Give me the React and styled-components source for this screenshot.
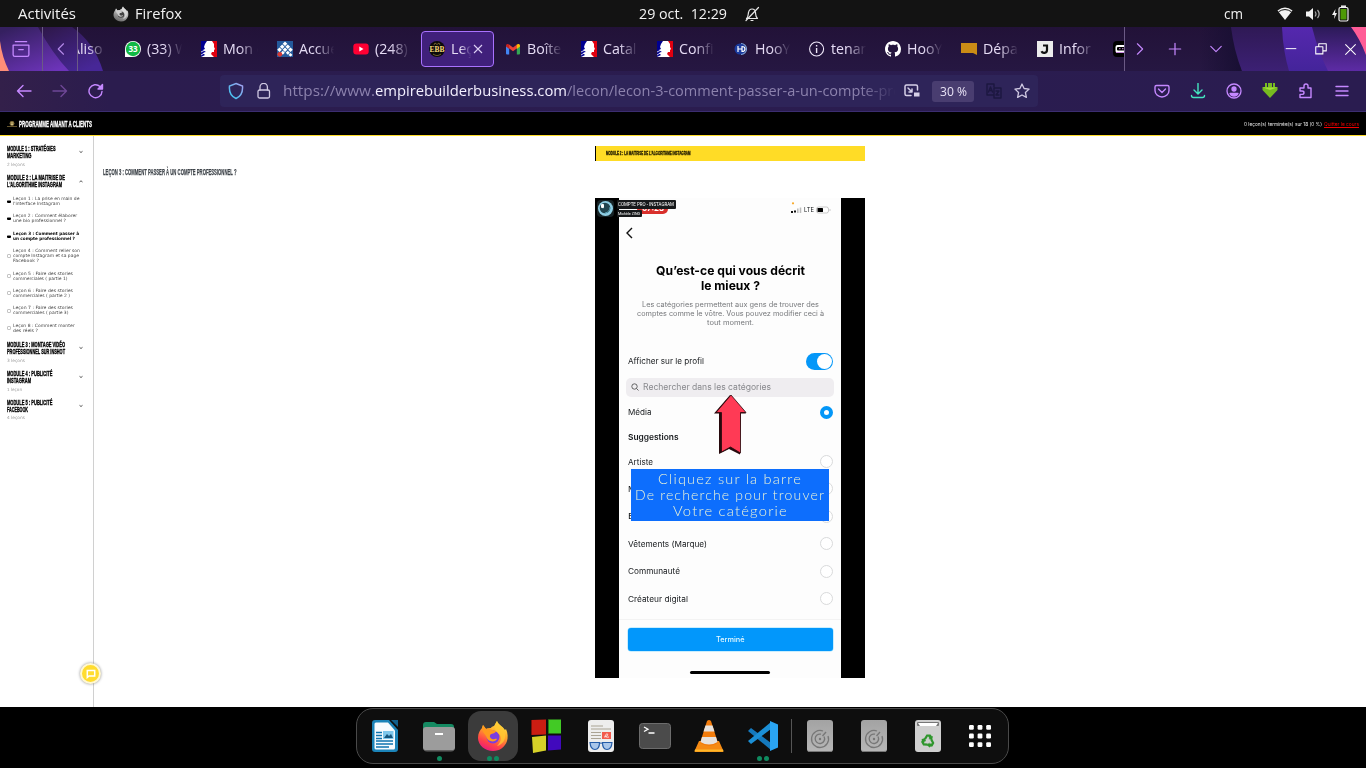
import React, { useLayoutEffect, useRef } from "react";
import styled, { createGlobalStyle, css } from "styled-components";

const ui = `"Open Sans", "Noto Sans", sans-serif`;

const Global = createGlobalStyle`
  * { box-sizing: border-box; }
  body { margin: 0; background: #000; overflow: hidden; font-family: ${ui}; }
  svg { display: block; flex: none; }
`;

/* Text stretched or condensed to a given width. */
const FitBox = styled.span`
  display: block;
  flex: none;
  width: ${(p) => p.$w}px;
  white-space: pre;
  span { display: inline-block; transform-origin: 0 50%; }
`;
function Fit({ w, children }) {
  const ref = useRef(null);
  useLayoutEffect(() => {
    const el = ref.current;
    el.style.transform = "none";
    const natural = el.getBoundingClientRect().width;
    if (natural) el.style.transform = `scaleX(${w / natural})`;
  }, [w]);
  return (
    <FitBox $w={w}>
      <span ref={ref}>{children}</span>
    </FitBox>
  );
}

const Screen = styled.div`
  width: 1366px;
  height: 768px;
  display: flex;
  flex-direction: column;
  overflow: hidden;
  background: #000;
`;

/* ---------- system bar ---------- */
const SystemBar = styled.header`
  height: 27px;
  flex: none;
  display: grid;
  grid-template-columns: 1fr 120px 1fr;
  align-items: center;
  background: #131313;
  color: #f2f2f2;
  font-size: 14px;
  line-height: 27px;
`;
const BarGroup = styled.div`
  display: flex;
  align-items: center;
  justify-content: ${(p) => p.$align || "flex-start"};
  gap: ${(p) => p.$gap || 0}px;
  padding: ${(p) => p.$pad || 0};
`;

/* ---------- firefox chrome ---------- */
const TabBar = styled.div`
  height: 44px;
  flex: none;
  position: relative;
  display: flex;
  align-items: center;
  background: linear-gradient(#221238, #261742);
`;
const Deco = styled.svg`
  position: absolute;
  top: 0;
  ${(p) => (p.$right ? "right: 0;" : "left: 0;")}
`;
const BarButton = styled.div`
  position: relative;
  width: ${(p) => p.$w}px;
  height: 44px;
  flex: none;
  display: flex;
  align-items: center;
  justify-content: center;
  ${(p) => p.$line && css`border-right: 1px solid #6b5a85;`}
`;
const TabStrip = styled.div`
  position: relative;
  width: 1046px;
  height: 44px;
  flex: none;
  display: flex;
  align-items: center;
  overflow: hidden;
`;
const Tab = styled.div`
  width: 76px;
  height: 36px;
  flex: none;
  display: flex;
  align-items: center;
  gap: 6px;
  padding-left: 8px;
  &:first-child { margin-left: -37px; }
  color: #e6dcf5;
  font-size: 14.2px;
  line-height: 36px;
  ${(p) => p.$active && css`
    width: 73px;
    margin-right: 3px;
    border: 1px solid #a972ff;
    border-radius: 4px;
    padding-left: 7px;
    background: #40207b;
  `}
`;
const TabLabel = styled.div`
  width: ${(p) => p.$w || 36}px;
  overflow: hidden;
  white-space: nowrap;
  mask-image: linear-gradient(90deg, #000 45%, transparent 98%);
`;
const CloseMark = styled.svg`margin-left: -5px;`;

const NavBar = styled.div`
  height: 41px;
  flex: none;
  display: flex;
  align-items: center;
  background: linear-gradient(90deg, #33204a 0, #2b1c4e 110px, #2a1c50 100%);
  border-bottom: 1px solid #3b2d70;
`;
const NavButtons = styled.div`
  width: 220px;
  display: flex;
  gap: 20px;
  padding-left: 16px;
`;
const UrlBar = styled.div`
  width: 818px;
  height: 32px;
  display: flex;
  align-items: center;
  padding-left: 8px;
  border-radius: 4px;
  background: #2e2459;
`;
const Url = styled.div`
  width: 613px;
  margin: 0 8px 0 11px;
  display: flex;
  overflow: hidden;
  color: #8c82ad;
  font-size: 14.2px;
  line-height: 32px;
  mask-image: linear-gradient(90deg, #000 94%, transparent 100%);
  strong { font-weight: 400; color: #f4f0ff; }
`;
const ZoomBadge = styled.div`
  width: 42px;
  height: 21px;
  margin: 0 12px;
  padding-left: 7.5px;
  border-radius: 3px;
  background: #493d70;
  color: #e8e2f5;
  font-size: 12px;
  line-height: 21px;
`;
const Tools = styled.div`
  display: flex;
  gap: 20px;
  padding-left: 116px;
`;

/* ---------- web page ---------- */
const heavy = css`
  font-family: "Liberation Sans Narrow", "Liberation Sans", Arial, sans-serif;
  font-weight: 700;
`;
const PageHeader = styled.div`
  height: 24px;
  flex: none;
  display: flex;
  align-items: center;
  justify-content: space-between;
  padding: 0 7px;
  background: #000;
  border-bottom: 1px solid #ffdd2a;
`;
const Brand = styled.div`
  ${heavy}
  display: flex;
  align-items: center;
  gap: 2px;
  color: #fff;
  font-size: 8.8px;
  -webkit-text-stroke: 0.3px #fff;
`;
const Progress = styled.div`
  display: flex;
  gap: 2px;
  color: #e8e8e8;
  font-family: Inter, sans-serif;
  font-size: 5px;
  u { color: #f00000; text-decoration: none; }
  u span span { text-decoration: underline; }
`;
const Page = styled.div`
  height: 571px;
  flex: none;
  display: flex;
  background: #fff;
`;
const Sidebar = styled.aside`
  position: relative;
  width: 94px;
  padding-top: 9px;
  border-right: 1px solid #d0d0d0;
`;
const Module = styled.div`
  display: flex;
  align-items: center;
  justify-content: space-between;
  height: 14px;
  margin-top: ${(p) => p.$mt || 0}px;
  padding: 0 9px 0 7px;
`;
const ModuleTitle = styled.div`
  ${heavy}
  color: #000;
  font-size: 8px;
  line-height: 7px;
  -webkit-text-stroke: 0.4px #000;
`;
const Count = styled.div`
  height: 6px;
  margin: 2.5px 0 0 7px;
  color: #999;
  font-family: "DejaVu Sans", sans-serif;
  font-size: 4.3px;
  line-height: 6px;
`;
const Lesson = styled.div`
  display: flex;
  align-items: center;
  gap: 2px;
  margin-top: ${(p) => p.$mt}px;
  padding-left: 7px;
  color: ${(p) => (p.$current ? "#000" : "#444")};
  font-family: "DejaVu Sans", sans-serif;
  font-size: 4.4px;
  line-height: 5px;
  font-weight: ${(p) => (p.$current ? 700 : 400)};
`;
const Check = styled.i`
  width: 4px;
  height: ${(p) => (p.$done ? 3 : 4)}px;
  margin-top: 1px;
  border-radius: 1px;
  ${(p) => (p.$done ? css`background: linear-gradient(#888 30%, #000 31%);` : css`border: 1px solid #c4c4c4;`)}
`;
const ChatButton = styled.div`
  position: absolute;
  left: 80px;
  bottom: 23px;
  width: 21px;
  height: 21px;
  display: grid;
  place-items: center;
  border: 2px solid #fff8d4;
  border-radius: 50%;
  background: #ffdc30;
  box-shadow: 0 0 3px rgba(0, 0, 0, 0.45);
`;
const Main = styled.main`
  width: 1272px;
  display: flex;
  flex-direction: column;
  align-items: center;
`;
const ModuleBanner = styled.div`
  ${heavy}
  width: 270px;
  height: 15px;
  margin-top: 10px;
  padding-left: 10px;
  border-left: 1px solid #000;
  background: #ffdc26;
  color: #1c1700;
  font-size: 4.7px;
  line-height: 15px;
  -webkit-text-stroke: 0.3px #1c1700;
`;
const LessonTitle = styled.h1`
  ${heavy}
  align-self: flex-start;
  height: 12px;
  margin: 5px 0 20px 9px;
  color: #3f454b;
  font-size: 9.6px;
  line-height: 12px;
  -webkit-text-stroke: 0.25px #3f454b;
`;
const Video = styled.div`
  position: relative;
  width: 270px;
  height: 480px;
  padding: 0 24px;
  background: #000;
`;

/* ---------- phone recording in the video ---------- */
const Phone = styled.div`
  width: 222px;
  height: 480px;
  padding: 0 8.5px;
  background: #fdfdfd;
  color: #16191c;
  font-family: Inter, sans-serif;
  font-size: 8px;
`;
const Status = styled.div`
  height: 24px;
  display: flex;
  align-items: center;
  justify-content: flex-end;
  gap: 2px;
  padding-right: 2px;
  font-size: 6.6px;
`;
const BackIcon = styled.svg`
  margin-left: -3px;
`;
const Heading = styled.h2`
  display: flex;
  flex-direction: column;
  align-items: center;
  margin: 18px 0 7px;
  font-size: 12.4px;
  line-height: 15px;
  font-weight: 700;
  color: #000;
`;
const Intro = styled.div`
  display: flex;
  flex-direction: column;
  align-items: center;
  margin-bottom: 21.5px;
  color: #77797c;
  font-size: 7.3px;
  line-height: 9px;
`;
const Row = styled.div`
  height: ${(p) => p.$h || 27.5}px;
  display: flex;
  align-items: center;
  justify-content: space-between;
  font-weight: ${(p) => (p.$bold ? 600 : 400)};
`;
const Toggle = styled.div`
  width: 27px;
  height: 17px;
  padding: 1px;
  display: flex;
  justify-content: flex-end;
  border-radius: 9px;
  background: #0497f8;
  &::after { content: ""; width: 15px; height: 15px; border-radius: 50%; background: #fff; }
`;
const Search = styled.div`
  height: 19px;
  margin: 3px -1.5px 2.5px;
  display: flex;
  align-items: center;
  gap: 4px;
  padding-left: 5px;
  border-radius: 5px;
  background: #efedf0;
  color: #88898d;
  font-size: 8.4px;
`;
const Radio = styled.i`
  width: 13px;
  height: 13px;
  border-radius: 50%;
  border: ${(p) => (p.$on ? "4.2px solid #0497f8" : "1px solid #d9dadb")};
  background: #fff;
`;
const Done = styled.div`
  height: 23px;
  margin: 8px 0 20px;
  display: flex;
  align-items: center;
  justify-content: center;
  border-radius: 3px;
  background: #0297fb;
  box-shadow: 0 0 0 0.5px #96e0ff;
  color: #e6f9ff;
  font-size: 7.2px;
  font-weight: 500;
`;
const Divider = styled.div`
  height: 1px;
  margin: 6px -8.5px 0;
  background: #f3f3f3;
`;
const HomeBar = styled.div`
  width: 80px;
  height: 3px;
  margin: 0 auto;
  border-radius: 2px;
  background: #000;
`;
const VideoBadge = styled.div`
  position: absolute;
  left: 22px;
  top: ${(p) => p.$top}px;
  height: ${(p) => p.$h}px;
  padding: 0 2px 0 1px;
  border-radius: 1px;
  background: #17191b;
  color: #fff;
  font: ${(p) => p.$size}px/${(p) => p.$h}px Roboto, sans-serif;
`;
const Recording = styled.div`
  position: absolute;
  left: 42px;
  top: 5px;
  width: 31px;
  height: 11px;
  border-radius: 5px;
  background: #d9302c;
  color: #fff;
  font: 700 8px/11px Inter, sans-serif;
  display: flex;
  justify-content: center;
`;
const Avatar = styled.svg`
  position: absolute;
  left: 2px;
  top: 2px;
`;
const Arrow = styled.svg`
  position: absolute;
  left: 118px;
  top: 195px;
`;
const Caption = styled.div`
  position: absolute;
  left: 36px;
  top: 271px;
  width: 198px;
  height: 52px;
  display: flex;
  flex-direction: column;
  align-items: center;
  padding-top: 2px;
  background: #0d6efd;
  color: #eef5d6;
  font-family: Lato, sans-serif;
  font-weight: 300;
  font-size: 14.5px;
  line-height: 16px;
  letter-spacing: 1.2px;
`;

/* ---------- dock ---------- */
const Dock = styled.footer`
  width: 653px;
  height: 56px;
  margin: 1px 0 0 356px;
  flex: none;
  display: flex;
  align-items: center;
  padding-left: 1px;
  border: 1px solid #4a4a4a;
  border-radius: 17px;
  background: #0e0e0e;
`;
const DockItem = styled.div`
  position: relative;
  width: ${(p) => p.$w || 54}px;
  height: 54px;
  flex: none;
  display: grid;
  place-items: center;
  &::before {
    content: "";
    position: absolute;
    inset: 2px;
    border-radius: 13px;
    background: ${(p) => (p.$active ? "#3b3b3b" : "transparent")};
  }
  svg { position: relative; }
`;
const Dots = styled.div`
  position: absolute;
  bottom: 2px;
  left: 0;
  right: 0;
  display: flex;
  justify-content: center;
  gap: 2px;
  i { width: 5px; height: 5px; border-radius: 50%; background: #0f8a5f; }
`;
const DockLine = styled.div`
  width: 1px;
  height: 34px;
  margin: 0 1px 0 1px;
  background: #555;
`;

/* ---------- icons ---------- */
const Ico = ({ s = 16, c = "#c588ff", w = 1.3, children }) => (
  <svg width={s} height={s} viewBox="0 0 16 16" fill="none" stroke={c} strokeWidth={w} strokeLinecap="round" strokeLinejoin="round">
    {children}
  </svg>
);
const Marianne = () => (
  <svg width="16" height="16" viewBox="0 0 16 16">
    <rect width="16" height="16" fill="#fff" />
    <path d="M0 0h6L4 3 3 6l1 2-2 1 3 2-3 1 2 2-4 2z" fill="#000091" />
    <path d="M16 0h-5l2 3v3l1 2-1 1v2h-2l-1 2 3 3h3z" fill="#e1000f" />
    <path d="M0 11l4-2M0 14l5-3" stroke="#fff" strokeWidth=".8" />
  </svg>
);
const Ebb = ({ s = 16 }) => (
  <svg width={s} height={s} viewBox="0 0 16 16">
    <circle cx="8" cy="8" r="8" fill="#0a0a0a" />
    <path d="M5 4l1-2 2 1.5L10 2l1 2M4 13c3 2 5 2 8 0" stroke="#8c7335" strokeWidth=".8" fill="none" />
    <text x="8" y="11.2" textAnchor="middle" fontSize="8.5" fontWeight="700" fontFamily="Liberation Serif, serif" fill="#f4d77b" textLength="15" lengthAdjust="spacingAndGlyphs">EBB</text>
  </svg>
);
const favicons = {
  none: <svg width="16" height="16" />,
  whatsapp: (
    <svg width="16" height="16" viewBox="0 0 16 16">
      <path d="M0 16V8a8 8 0 1 1 8 8z" fill="#fff" />
      <circle cx="8" cy="8" r="7.2" fill="#10b944" />
      <text x="8" y="11" textAnchor="middle" fontSize="8" fontWeight="700" fontFamily="Open Sans, sans-serif" fill="#fff">33</text>
    </svg>
  ),
  marianne: <Marianne />,
  accu: (
    <svg width="16" height="16" viewBox="0 0 16 16">
      <rect width="16" height="16" fill="#245a9c" />
      <g fill="#fff">
        <path d="M8 .5l2.300 2.300L8 5.100 5.700 2.800zM5.200 3.500l2.300 2.300-2.300 2.300-2.300-2.300zM10.800 3.500l2.300 2.300-2.300 2.300-2.300-2.300zM2.500 6.500l2.300 2.300-2.300 2.300L.2 8.800zM8 6.500l2.300 2.300L8 11.100 5.700 8.800zM13.500 6.500l2.300 2.300-2.300 2.300-2.300-2.300zM5.800 9.800l2 2-2 2-2-2zM10.800 9.800l2 2-2 2-2-2zM13.500 12l2 2-2 1.500-2-1.500z" />
      </g>
      <circle cx="2.800" cy="13.300" r="2.400" fill="#d93a35" />
    </svg>
  ),
  youtube: (
    <svg width="16" height="16" viewBox="0 0 16 16">
      <rect x=".3" y="2.4" width="15.4" height="11.2" rx="3" fill="#ff0033" />
      <path d="M6.3 5.5v5l4.2-2.5z" fill="#fff" />
    </svg>
  ),
  ebb: <Ebb />,
  gmail: (
    <svg width="16" height="16" viewBox="0 0 16 16">
      <path d="M1 4.500l3.200 2.300v6.700H2a1 1 0 0 1-1-1z" fill="#4285f4" />
      <path d="M15 4.500l-3.200 2.300v6.700H14a1 1 0 0 0 1-1z" fill="#34a853" />
      <path d="M4 3.600L8 6.600l4-3v3.600l-4 3-4-3z" fill="#ea4335" />
      <path d="M11.800 3.600c1.300-1.200 3.200-.6 3.200 1v1l-3.200 2.400z" fill="#fbbc04" />
      <path d="M4.200 3.600C2.900 2.400 1 3 1 4.600v1L4.200 8z" fill="#c5221f" />
    </svg>
  ),
  hoo: (
    <svg width="16" height="16" viewBox="0 0 16 16">
      <circle cx="7" cy="8" r="5.500" fill="#1a3b9e" />
      <path d="M8 2.500a5.500 5.500 0 0 1 0 11" fill="none" stroke="#7fa6de" strokeWidth="1.200" />
      <path d="M5 5v6M5 8h4M9 5v6M9 5.500c4 0 4 5 0 5" stroke="#fff" strokeWidth="1.200" fill="none" />
    </svg>
  ),
  info: (
    <svg width="16" height="16" viewBox="0 0 16 16" fill="none" stroke="#efe8fa" strokeWidth="1.100">
      <circle cx="7.600" cy="8" r="7" />
      <path d="M7.600 7v5M7.600 4v1.500" strokeWidth="1.400" />
    </svg>
  ),
  github: (
    <svg width="16" height="16" viewBox="0 0 16 16" fill="#fff">
      <path d="M8 0C3.580 0 0 3.580 0 8c0 3.540 2.290 6.530 5.470 7.590.4.070.55-.17.55-.38 0-.19-.01-.82-.01-1.490-2.010.37-2.530-.49-2.690-.94-.09-.23-.48-.94-.82-1.130-.28-.15-.68-.52-.01-.53.63-.01 1.080.58 1.230.82.72 1.210 1.870.87 2.330.66.07-.52.28-.87.51-1.070-1.780-.2-3.640-.89-3.640-3.950 0-.87.31-1.590.82-2.150-.08-.2-.36-1.020.08-2.120 0 0 .67-.21 2.200.82.64-.18 1.320-.27 2-.27s1.360.09 2 .27c1.530-1.040 2.200-.82 2.200-.82.44 1.100.16 1.920.08 2.120.51.56.82 1.270.82 2.150 0 3.070-1.870 3.750-3.650 3.950.29.25.54.73.54 1.480 0 1.070-.01 1.930-.01 2.200 0 .21.15.46.55.38A8.010 8.010 0 0 0 16 8c0-4.420-3.580-8-8-8z" />
    </svg>
  ),
  depart: (
    <svg width="16" height="16" viewBox="0 0 16 16"><path d="M0 2h16v12l-4-2H0z" fill="#cb8c15" /></svg>
  ),
  j: (
    <svg width="16" height="16" viewBox="0 0 16 16">
      <rect width="16" height="16" fill="#ececec" />
      <path d="M6 4.500h4V9c0 3.500-4.500 3.500-5.500 1.300" fill="none" stroke="#111" strokeWidth="2.200" />
    </svg>
  ),
  bot: (
    <svg width="16" height="16" viewBox="0 0 16 16">
      <rect width="16" height="16" rx="4" fill="#000" />
      <rect x="2.500" y="4" width="13" height="8" rx="2" fill="#fff" />
      <rect x="4" y="6" width="12" height="3.500" rx="1" fill="#000" />
      <path d="M6 7.700h1.500M9 7.700h1.500M3 11.500h9" stroke="#c98adf" />
    </svg>
  ),
};

const FirefoxLogo = ({ s = 32, gray }) => (
  <svg width={s} height={s} viewBox="0 0 32 32">
    <defs>
      <linearGradient id={gray ? "fg" : "ff"} x1=".75" y1="0" x2=".3" y2="1">
        <stop offset="0" stopColor={gray ? "#eee" : "#fff14a"} />
        <stop offset=".4" stopColor={gray ? "#bbb" : "#ffa52a"} />
        <stop offset=".75" stopColor={gray ? "#888" : "#ff4248"} />
        <stop offset="1" stopColor={gray ? "#666" : "#e9197e"} />
      </linearGradient>
    </defs>
    <path d="M1 18C1 13 3 10 5 8l1-3 3 4c2-1 4-1 5-1 0-1 2-2 3-2l3-5c1 4 6 5 8 9l1-1c2 4 2 9 1 12-2 6-7 10-14 10C8 31 1 25 1 18z" fill={`url(#${gray ? "fg" : "ff"})`} />
    <circle cx="16" cy="17" r="6.500" fill={gray ? "#444" : "#7a3ee0"} />
    <path d="M5 8l1-3 3 4c3-1 5 0 6 1l4 1c0 2-4 3-5 3-2 2-1 4 1 5s4-1 5 0c-2 4-10 3-11-3-2-3-4-5-4-8z" fill={gray ? "#ccc" : "#ff9a1f"} />
    <path d="M20 1c1 4 8 6 8 13 1 6-3 11-8 12 5-5 5-10 1-13-4-3-4-8-1-12z" fill={gray ? "#ddd" : "#ffc832"} opacity=".8" />
  </svg>
);
const Drive = () => (
  <svg width="32" height="34" viewBox="0 0 32 34">
    <defs><linearGradient id="drv" x2="0" y2="1"><stop stopColor="#a3a3a3" /><stop offset="1" stopColor="#b7b7b7" /></linearGradient></defs>
    <rect x="3" y="1" width="26" height="32" rx="3" fill="url(#drv)" />
    <path d="M3.500 31.500q0 1 2.500 1h20q2.500 0 2.500-1" stroke="#777" fill="none" />
    <g fill="none" stroke="#777" strokeWidth="1.300">
      <path d="M24 17a8.500 8.500 0 1 1-5-5M20 17.500a4.700 4.700 0 1 1-3-2.300" />
      <path d="M18.500 17l3.500-4" />
    </g>
    <circle cx="16" cy="20" r="1.200" fill="#777" />
  </svg>
);
const dockIcons = {
  writer: (
    <svg width="32" height="34" viewBox="0 0 32 34">
      <path d="M6 1h14l9 10v19q0 3-3 3H6q-3 0-3-3V4q0-3 3-3z" fill="#1b83b8" />
      <path d="M7 3.500h12l7 8V29q0 1.500-1.500 1.500h-17Q5.500 30.500 5.500 29V5q0-1.500 1.500-1.500z" fill="#f6fbfe" />
      <path d="M22 1h7v7z" fill="#12608c" />
      <path d="M7 13.500h6M7 16.500h6M7 19.500h6M7 22h17M7 25h17M7 28h13" stroke="#0e74b0" strokeWidth="1.300" />
      <rect x="14" y="12" width="10.500" height="8" fill="#7ec7ec" />
      <path d="M15 19l3-4 2 2 2-2 2 4z" fill="#15557c" />
    </svg>
  ),
  files: (
    <svg width="34" height="34" viewBox="0 0 34 34">
      <path d="M1 6q0-3 3-3h8l3 2h14q3 0 3 3v8H1z" fill="#158a62" />
      <rect x="1" y="8" width="32" height="23.500" rx="3" fill="#9c9c9c" />
      <path d="M2 30.500q0 1.500 3 1.500h24q3 0 3-1.500" stroke="#666" fill="none" />
      <path d="M13 15h8" stroke="#fff" strokeWidth="2" />
    </svg>
  ),
  blocks: (
    <svg width="34" height="36" viewBox="0 0 34 36">
      <path d="M1 2l15-.5v15L1 17z" fill="#cb1d12" /><path d="M18 1.500h13v14H18z" fill="#42ca25" />
      <path d="M2 19l14-1.500v15L3 35z" fill="#d6d128" /><path d="M18 17.500h13v14l-13 1z" fill="#4109bd" />
      <path d="M1 2v15l1 .5V1.800zM18 1.500v14h1V2z" fill="#0006" />
    </svg>
  ),
  doc: (
    <svg width="32" height="34" viewBox="0 0 32 34">
      <rect x="3" y="1" width="26" height="32" rx="3" fill="#ededed" />
      <path d="M6 7h12M6 10h20M6 13.500h10M6 16.500h10M6 19.500h10" stroke="#aaa394" strokeWidth="1.200" />
      <rect x="17" y="13" width="9" height="7" fill="#f25a4d" />
      <path d="M19 18c3 0 5-3 3-3s-3 4 2 3" stroke="#fff" fill="none" strokeWidth=".8" />
      <path d="M5 23.500h9.500q0 7-4.500 7t-5-7zM17.500 23.500H27q-.5 7-5 7t-4.500-7z" fill="#a9c6ea" stroke="#245ca8" strokeWidth="1.200" />
      <path d="M14 24.500q2-1 4 0" stroke="#245ca8" fill="none" />
    </svg>
  ),
  term: (
    <svg width="34" height="34" viewBox="0 0 34 34">
      <rect x="1.500" y="4.500" width="31" height="25" rx="3" fill="#4b4b4b" stroke="#6c6c6c" />
      <path d="M6 8l4 2.200L6 12.500M10.500 14h6" stroke="#fff" strokeWidth="1.300" fill="none" />
    </svg>
  ),
  vlc: (
    <svg width="32" height="34" viewBox="0 0 32 34">
      <path d="M6 22h20l4 9q1 2-1 2H3q-2 0-1-2z" fill="#f58a13" />
      <path d="M2 30.500h28l.5 2H1.500z" fill="#ffb82a" />
      <path d="M14 2q2-2 4 0l7 22q-9 6-18 0z" fill="#f27c0c" />
      <path d="M12.500 6.500h7l2 6h-11zM9 18h14l1.500 5q-8.500 5-17 0z" fill="#e6e2dd" />
    </svg>
  ),
  code: (
    <svg width="32" height="34" viewBox="0 0 32 34">
      <path d="M1 12l3-3 20 15v7z" fill="#1579bd" />
      <path d="M1 22l3 3L24 10V3z" fill="#1b8fd6" />
      <path d="M23 2l8 3.500v23L23 32z" fill="#2aa4f2" />
    </svg>
  ),
  drive: <Drive />,
  trash: (
    <svg width="32" height="34" viewBox="0 0 32 34">
      <rect x="3" y="1" width="26" height="32" rx="3" fill="#cfcfcf" />
      <rect x="5" y="3" width="22" height="4" rx="1" fill="#777" />
      <path d="M6 4h20l-2 3H8z" fill="#fff" />
      <g transform="translate(16 22)" fill="#2f962d">
        {[0, 120, 240].map((a) => (
          <path key={a} transform={`rotate(${a})`} d="M-4-2.500L-1.500-6.500h4L4-4.500l1-.5-1 4-3.500-1 1-.7-1.500-2-2 3.200z" />
        ))}
      </g>
    </svg>
  ),
  grid: (
    <svg width="24" height="24" viewBox="0 0 24 24" fill="#fff">
      {[0, 1, 2].map((r) => [0, 1, 2].map((c) => <rect key={`${r}${c}`} x={1 + c * 8.600} y={1 + r * 8.600} width="4.800" height="4.800" rx="1.200" />))}
    </svg>
  ),
};

/* ---------- data ---------- */
const tabs = [
  ["none", "Aliso"],
  ["whatsapp", "(33) W"],
  ["marianne", "Mon e"],
  ["accu", "Accue"],
  ["youtube", "(248)"],
  ["ebb", "Leço", true],
  ["gmail", "Boîte"],
  ["marianne", "Catal"],
  ["marianne", "Confi"],
  ["hoo", "HooY"],
  ["info", "tenan"],
  ["github", "HooY"],
  ["depart", "Dépar"],
  ["j", "Infor"],
  ["bot", ""],
];
const lessons = [
  { mt: 8, done: true, lines: [["Leçon 1 : La prise en main de", 66.5], ["l'interface Instagram", 47]] },
  { mt: 7.2, done: true, lines: [["Leçon 2 : Comment élaborer", 64], ["une bio professionnel ?", 53]] },
  { mt: 7.5, done: true, current: true, lines: [["Leçon 3 : Comment passer à", 66], ["un compte professionnel ?", 62]] },
  { mt: 7, lines: [["Leçon 4 : Comment relier son", 67], ["compte Instagram et sa page", 66], ["Facebook ?", 26]] },
  { mt: 8, lines: [["Leçon 5 : Faire des stories", 60], ["commerciales ( partie 1)", 54.5]] },
  { mt: 7.3, lines: [["Leçon 6 : Faire des stories", 60], ["commerciales ( partie 2 )", 57]] },
  { mt: 7.3, lines: [["Leçon 7 : Faire des stories", 60], ["commerciales ( partie 3)", 55.5]] },
  { mt: 7.7, lines: [["Leçon 8 : Comment monter", 61.5], ["des réels ?", 25]] },
];

function ModuleHead({ lines, mt, up, count }) {
  return (
    <>
      <Module $mt={mt}>
        <ModuleTitle>{lines.map(([t, w]) => <Fit key={t} w={w}>{t}</Fit>)}</ModuleTitle>
        <svg width="6" height="4" viewBox="0 0 6 4" fill="none" stroke="#555" strokeWidth="1">
          <path d={up ? "M1.500 3L3 1.800 4.500 3" : "M1.500 1.300L3 2.500l1.500-1.200"} />
        </svg>
      </Module>
      {count && <Count><Fit w={count[1]}>{count[0]}</Fit></Count>}
    </>
  );
}

function PhoneScreen() {
  return (
    <Phone>
      <Status>
        <svg width="11" height="16" viewBox="0 0 11 16">
          <circle cx="2" cy="1.300" r="1.100" fill="#f9a825" />
          <path d="M0 10h2M3 9.500h2" stroke="#111" strokeWidth="2" />
          <path d="M6.800 11V6.500M9.500 11V5.500" stroke="#bbb" strokeWidth="1.500" />
        </svg>
        <Fit w={10}>LTE</Fit>
        <svg width="15" height="8" viewBox="0 0 15 8">
          <rect x=".5" y="1" width="12" height="6" rx="2" fill="#fff" stroke="#bbb" strokeWidth=".8" />
          <rect x="1.500" y="2" width="5.500" height="4" rx=".6" fill="#000" />
          <path d="M14 3v2" stroke="#ccc" />
        </svg>
      </Status>
      <Row $h={22.5}>
        <BackIcon width="10" height="12" viewBox="0 0 10 12" fill="none" stroke="#111" strokeWidth="1.400"><path d="M7 1L2 6l5 5" /></BackIcon>
      </Row>
      <Heading><Fit w={149}>Qu’est-ce qui vous décrit</Fit><Fit w={59}>le mieux ?</Fit></Heading>
      <Intro>
        <Fit w={177}>Les catégories permettent aux gens de trouver des</Fit>
        <Fit w={187}>comptes comme le vôtre. Vous pouvez modifier ceci à</Fit>
        <Fit w={47}>tout moment.</Fit>
      </Intro>
      <Row $h={26.5}><Fit w={76}>Afficher sur le profil</Fit><Toggle /></Row>
      <Search>
        <svg width="8" height="8" viewBox="0 0 8 8" fill="none" stroke="#555" strokeWidth=".9"><circle cx="3.500" cy="3.500" r="2.700" /><path d="M5.500 5.500L7.500 7.500" /></svg>
        <Fit w={128}>Rechercher dans les catégories</Fit>
      </Search>
      <Row $h={26.5}><Fit w={23.5}>Média</Fit><Radio $on /></Row>
      <Row $h={23} $bold><Fit w={50.5}>Suggestions</Fit></Row>
      <Row $h={26.5}><Fit w={25}>Artiste</Fit><Radio /></Row>
      <Row><Fit w={8}>M</Fit><Radio /></Row>
      <Row><Fit w={6}>E</Fit><Radio /></Row>
      <Row><Fit w={79}>Vêtements (Marque)</Fit><Radio /></Row>
      <Row><Fit w={52}>Communauté</Fit><Radio /></Row>
      <Row><Fit w={60}>Créateur digital</Fit><Radio /></Row>
      <Divider />
      <Done><Fit w={28.5}>Terminé</Fit></Done>
      <HomeBar />
    </Phone>
  );
}

export default function App() {
  return (
    <Screen>
      <Global />
      <SystemBar>
        <BarGroup $pad="0 0 0 18px">
          <Fit w={58}>Activités</Fit>
          <BarGroup $pad="0 0 0 37px" $gap={6}><FirefoxLogo s={16} gray /><Fit w={47}>Firefox</Fit></BarGroup>
        </BarGroup>
        <BarGroup $pad="0 0 0 16px" $gap={17}>
          <Fit w={88}>29 oct.  12:29</Fit>
          <Ico c="#e8e8e8" w={1.200}><path d="M2.500 12.500c2-1.500 1.500-4 2-6 .5-2.500 2-3.500 3.500-3.500 2 0 3.300 1.500 3.500 3.500.2 2 0 4.500 2 6zM7 14.500h2M2 14.500L14.500 1.500" /></Ico>
        </BarGroup>
        <BarGroup $align="flex-end" $pad="0 17px 0 0">
          <BarGroup $pad="0 34px 0 0"><Fit w={19}>cm</Fit></BarGroup>
          <svg width="16" height="16" viewBox="0 0 16 16"><path d="M.5 4.500Q8-1.500 15.500 4.500L8 14z" fill="#f2f2f2" /><path d="M1.500 5.800Q8 1.300 14.500 5.800" stroke="#131313" fill="none" /></svg>
          <BarGroup $pad="0 0 0 12px">
            <svg width="16" height="16" viewBox="0 0 16 16"><path d="M1 5.500h3L8 2v12L4 10.500H1z" fill="#f2f2f2" /><path d="M10 5.500q2 2.500 0 5M12.500 4q3.300 4 0 8" stroke="#aaa" strokeWidth="1.200" fill="none" /></svg>
          </BarGroup>
          <BarGroup $pad="0 0 0 10px">
            <svg width="18" height="18" viewBox="0 0 18 18"><path d="M4.500 4L1 10h2.500L3 14l3-6H4z" fill="#f2f2f2" /><rect x="8" y="2.500" width="9" height="13.500" rx="1.500" fill="none" stroke="#f2f2f2" strokeWidth="1.200" /><rect x="9.500" y="4" width="6" height="10.500" fill="#4e9a06" /><path d="M10 1.200h5" stroke="#f2f2f2" strokeWidth="1.500" /></svg>
          </BarGroup>
        </BarGroup>
      </SystemBar>

      <TabBar>
        <Deco width="130" height="44" viewBox="0 0 130 44">
          <defs>
            <linearGradient id="p1" x1=".2" y1="0" x2=".8" y2="1"><stop stopColor="#352060" /><stop offset="1" stopColor="#6d34ba" /></linearGradient>
            <linearGradient id="p2" x1="0" y1="0" x2=".7" y2="1"><stop stopColor="#2d1746" /><stop offset="1" stopColor="#472797" /></linearGradient>
          </defs>
          <path d="M38 0h34q22 15 31 44H60z" fill="url(#p2)" />
          <path d="M0 0h38q14 26 31 44H0z" fill="url(#p1)" />
          <path d="M0 14q2 16 9 30H0z" fill="#ff8e78" />
        </Deco>
        <Deco $right width="166" height="44" viewBox="0 0 166 44">
          <defs>
            <linearGradient id="q1" x2="0" y2="1"><stop stopColor="#2f1955" /><stop offset="1" stopColor="#3c2074" /></linearGradient>
            <linearGradient id="q2" x2="0" y2="1"><stop stopColor="#5528ae" /><stop offset="1" stopColor="#44249a" /></linearGradient>
            <linearGradient id="q3" x2="0" y2="1"><stop stopColor="#2c1a58" /><stop offset="1" stopColor="#5d2ba5" /></linearGradient>
            <linearGradient id="q0"><stop stopColor="#180f33" stopOpacity="0" /><stop offset="1" stopColor="#180f33" /></linearGradient>
          </defs>
          <path d="M0 0h31l11 44H0z" fill="url(#q0)" />
          <path d="M31 0h135v44H42q-8-20-11-44z" fill="url(#q1)" />
          <path d="M82 0h84v44H89q-6-20-7-44z" fill="url(#q2)" />
          <path d="M112 0h54v44h-38q-10-20-16-44z" fill="url(#q3)" />
          <path d="M151 0h15v28Q160 12 151 0z" fill="#ff5c96" />
        </Deco>
        <BarButton $w={43} $line>
          <Ico s={18} w={1.150}><path d="M3 1.500h10M1.500 4.500h13M1 4.500v8.500q0 1.500 1.500 1.500h11q1.500 0 1.500-1.500V4.500M6 8.500h4" /></Ico>
        </BarButton>
        <BarButton $w={35} $line><Ico s={14} c="#b58aea"><path d="M12 2L6 8l6 6" /></Ico></BarButton>
        <TabStrip>
          {tabs.map(([icon, label, active], i) => (
            <Tab key={i} $active={active}>
              {favicons[icon]}
              <TabLabel $w={active ? 21 : 36}>{label}</TabLabel>
              {active && <CloseMark width="10" height="10" viewBox="0 0 10 10" stroke="#ddd0f5" strokeWidth="1.100"><path d="M1 1l8 8M9 1L1 9" /></CloseMark>}
            </Tab>
          ))}
        </TabStrip>
        <BarButton $w={1} $line />
        <BarButton $w={29}><Ico s={14}><path d="M5 2l6 6-6 6" /></Ico></BarButton>
        <BarButton $w={42}><Ico s={14} w={1.400}><path d="M8 1.500v13M1.500 8h13" /></Ico></BarButton>
        <BarButton $w={39}><Ico s={14}><path d="M2 5l6 6 6-6" /></Ico></BarButton>
        <BarButton $w={40} />
        <BarButton $w={31}><Ico s={12} c="#fff" w={1.300}><path d="M1.500 7.500h13" /></Ico></BarButton>
        <BarButton $w={29}><Ico s={12} c="#fff" w={1.400}><path d="M1 5h9.500v9.500H1zM5 5V1h10v9.500h-4.500" /></Ico></BarButton>
        <BarButton $w={31}><Ico s={13} c="#fff" w={1.300}><path d="M2 2l12 12M14 2L2 14" /></Ico></BarButton>
      </TabBar>

      <NavBar>
        <NavButtons>
          <Ico w={1.400}><path d="M15 8H1.500M7 2.500L1.500 8 7 13.500" /></Ico>
          <Ico c="#6e4796" w={1.400}><path d="M1 8h13.500M9 2.500L14.500 8 9 13.500" /></Ico>
          <Ico w={1.400}><path d="M14 8.500a6.500 6.500 0 1 1-2-5L14 5.500" /><path d="M14.500 1.500v4.500H10z" fill="#c588ff" /></Ico>
        </NavButtons>
        <UrlBar>
          <svg width="16" height="18" viewBox="0 0 16 18"><defs><linearGradient id="sh" x1="0" y1="1" x2="1" y2="0"><stop stopColor="#35c7ef" /><stop offset="1" stopColor="#a6a0f0" /></linearGradient></defs><path d="M8 1.500l6.500 2.500c.4 5-1 10-6.500 12.500C2.500 14 1 9 1.500 4z" fill="none" stroke="url(#sh)" strokeWidth="1.500" /></svg>
          <BarGroup $pad="0 0 0 12px"><Ico c="#cfc8e2" w={1.300}><rect x="2" y="7" width="11.500" height="8" rx="1.500" /><path d="M4 7V4a3.700 3.700 0 0 1 7.400 0v3" /></Ico></BarGroup>
          <Url>
            <Fit w={92}>https://www.</Fit>
            <strong><Fit w={192}>empirebuilderbusiness.com</Fit></strong>
            <Fit w={335}>/lecon/lecon-3-comment-passer-a-un-compte-pro</Fit>
          </Url>
          <Ico c="#d6cfe8" w={1.500}><path d="M7 12.500H2.500q-1.500 0-1.500-1.500V3.500Q1 2 2.500 2h9.500q1.500 0 1.500 1.500V7M4 5l4 4M8 6v3H5" /><rect x="10" y="9.500" width="5.500" height="4" fill="#d6cfe8" stroke="none" /></Ico>
          <ZoomBadge><Fit w={27}>30 %</Fit></ZoomBadge>
          <Ico c="#1c1740" w={1.400}><path d="M8 12H1V1h7v3M2.500 9l2-5 2 5M3 7.500h3M8 5h7v10H8zM10 8h3l-3 4h3" /></Ico>
          <BarGroup $pad="0 0 0 12px"><Ico c="#cfc8e2" w={1.300}><path d="M8 1l2.100 4.500 5 .6-3.700 3.400 1 4.900L8 12l-4.400 2.400 1-4.900L.9 6.100l5-.6z" /></Ico></BarGroup>
        </UrlBar>
        <Tools>
          <Ico w={1.400}><path d="M2.500 2.500h11q1.500 0 1.500 1.500v3.500a7 6.500 0 0 1-14 0V4q0-1.500 1.500-1.500zM4.500 6L8 9.500 11.500 6" /></Ico>
          <Ico c="#44e6c0" w={1.400}><path d="M8 .5v10M4 7l4 4 4-4M1.500 12.500q0 2 2 2h9q2 0 2-2" /></Ico>
          <Ico w={1.300}><circle cx="8" cy="8" r="7" /><circle cx="8" cy="6" r="2" fill="#c588ff" /><path d="M4 10.500h8q-1 2.500-4 2.500t-4-2.500z" fill="#c588ff" /></Ico>
          <svg width="16" height="16" viewBox="0 0 16 16"><path d="M3 0h2v4h1V0h4v4h1V0h2v4h2.500v3L8 15 .5 7V4H3z" fill="#77bb20" /><path d="M1 4.500h14L8 7z" fill="#a5df3a" /></svg>
          <Ico w={1.400}><path d="M2 14.500h11V5h-3V3q0-2-2-2T6 3v2H2v3h2q2 0 2 1.700t-2 1.700H2z" /></Ico>
          <Ico w={1.400}><path d="M2 3.500h12M2 8h12M2 12.500h12" /></Ico>
        </Tools>
      </NavBar>

      <PageHeader>
        <Brand>
          <svg width="10" height="8" viewBox="0 0 10 8"><circle cx="5" cy="3.500" r="2.400" fill="#8c7740" /><path d="M4 3h2M4 4.500h2" stroke="#fff1b0" strokeWidth=".6" /><path d="M0 6.500h10" stroke="#7d6a38" strokeWidth=".8" /></svg>
          <Fit w={73}>PROGRAMME AIMANT A CLIENTS</Fit>
        </Brand>
        <Progress><Fit w={78}>0 leçon(s) terminée(s) sur 18 (0 %)</Fit><u><Fit w={35}>Quitter le cours</Fit></u></Progress>
      </PageHeader>

      <Page>
        <Sidebar>
          <ModuleHead lines={[["MODULE 1 : STRATÉGIES", 48.5], ["MARKETING", 24.5]]} count={["2 leçons", 18]} />
          <ModuleHead mt={6.5} up lines={[["MODULE 2 : LA MAITRISE DE", 58], ["L'ALGORITHME INSTAGRAM", 55]]} />
          {lessons.map((l, i) => (
            <Lesson key={i} $mt={l.mt} $current={l.current}>
              <Check $done={l.done} />
              <div>{l.lines.map(([t, w]) => <Fit key={t} w={w}>{t}</Fit>)}</div>
            </Lesson>
          ))}
          <ModuleHead mt={8.5} lines={[["MODULE 3 : MONTAGE VIDÉO", 58], ["PROFESSIONNEL SUR INSHOT", 58]]} count={["3 leçons", 18]} />
          <ModuleHead mt={6.5} lines={[["MODULE 4 : PUBLICITÉ", 45.5], ["INSTAGRAM", 24]]} count={["1 leçon", 15]} />
          <ModuleHead mt={6} lines={[["MODULE 5 : PUBLICITÉ", 45.5], ["FACEBOOK", 21]]} count={["4 leçons", 18]} />
          <ChatButton>
            <svg width="10" height="10" viewBox="0 0 10 10" fill="none" stroke="#fff" strokeWidth="1.500"><path d="M1.300 8.500V1.500h7.400v5.500H3z" /></svg>
          </ChatButton>
        </Sidebar>
        <Main>
          <ModuleBanner><Fit w={84.5}>MODULE 2 : LA MAITRISE DE L'ALGORITHME INSTAGRAM</Fit></ModuleBanner>
          <LessonTitle><Fit w={133.5}>LEÇON 3 : COMMENT PASSER À UN COMPTE PROFESSIONNEL ?</Fit></LessonTitle>
          <Video>
            <PhoneScreen />
            <Recording><Fit w={22}>07:23</Fit></Recording>
            <Avatar width="17" height="17" viewBox="0 0 17 17">
              <rect width="17" height="17" rx="4" fill="#172326" />
              <circle cx="8.500" cy="8.500" r="7.500" fill="#8ecde3" />
              <circle cx="8" cy="8" r="5.300" fill="#23454f" />
              <path d="M8 13q5-1 5-6M6 4.500v4" stroke="#5ba4b8" fill="none" />
              <rect x="4" y="4" width="3" height="4" rx="1" fill="#fff" />
            </Avatar>
            <VideoBadge $top={2} $h={9} $size={5.6}><Fit w={56}>COMPTE PRO - INSTAGRAM</Fit></VideoBadge>
            <VideoBadge $top={12} $h={7} $size={4.4}><Fit w={22}>Michèle ZING</Fit></VideoBadge>
            <Caption>
              <Fit w={144}>Cliquez sur la barre</Fit>
              <Fit w={190}>De recherche pour trouver</Fit>
              <Fit w={115}>Votre catégorie</Fit>
            </Caption>
            <Arrow width="36" height="64" viewBox="0 0 36 64">
              <path d="M17 2L1 20.500h5V61l10-5 11 5.500 1-41h5z" fill="#26090d" />
              <path d="M18 2L3 19.500h5.500V59l9-5 10 6V19.500H33z" fill="#ff3a55" stroke="#26090d" strokeWidth=".8" />
            </Arrow>
          </Video>
        </Main>
      </Page>

      <Dock>
        <DockItem>{dockIcons.writer}</DockItem>
        <DockItem>{dockIcons.files}<Dots><i /></Dots></DockItem>
        <DockItem $active><FirefoxLogo /><Dots><i /><i /></Dots></DockItem>
        <DockItem>{dockIcons.blocks}</DockItem>
        <DockItem>{dockIcons.doc}</DockItem>
        <DockItem>{dockIcons.term}</DockItem>
        <DockItem>{dockIcons.vlc}</DockItem>
        <DockItem>{dockIcons.code}<Dots><i /><i /></Dots></DockItem>
        <DockLine />
        <DockItem>{dockIcons.drive}</DockItem>
        <DockItem>{dockIcons.drive}</DockItem>
        <DockItem>{dockIcons.trash}</DockItem>
        <DockItem $w={50}>{dockIcons.grid}</DockItem>
      </Dock>
    </Screen>
  );
}
